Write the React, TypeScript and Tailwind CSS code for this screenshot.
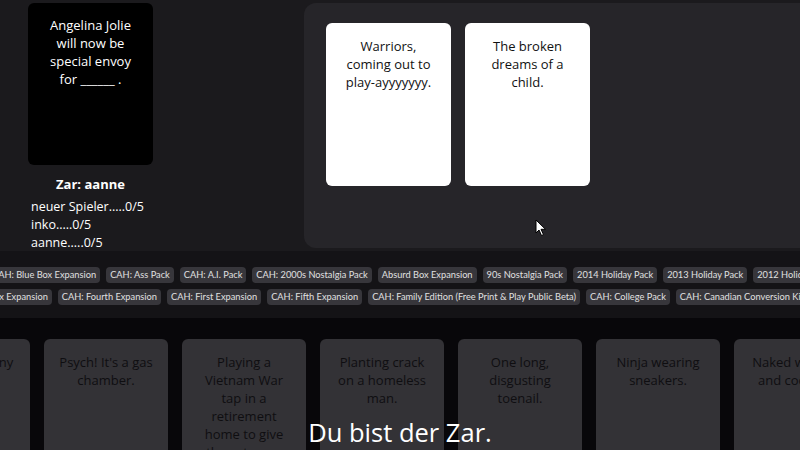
import React from 'react';

const font = "font-['Open_Sans','Noto_Sans',sans-serif]";

const packsTop = [
  'CAH: Blue Box Expansion',
  'CAH: Ass Pack',
  'CAH: A.I. Pack',
  'CAH: 2000s Nostalgia Pack',
  'Absurd Box Expansion',
  '90s Nostalgia Pack',
  '2014 Holiday Pack',
  '2013 Holiday Pack',
  '2012 Holiday Pack',
];

const packsBottom = [
  'CAH: Green Box Expansion',
  'CAH: Fourth Expansion',
  'CAH: First Expansion',
  'CAH: Fifth Expansion',
  'CAH: Family Edition (Free Print & Play Public Beta)',
  'CAH: College Pack',
  'CAH: Canadian Conversion Kit',
];

const hand = [
  'Having a funny uncle in Baltimore, Maine.',
  "Psych! It's a gas chamber.",
  'Playing a Vietnam War tap in a retirement home to give the veterans flashbacks.',
  'Planting crack on a homeless man.',
  'One long, disgusting toenail.',
  'Ninja wearing sneakers.',
  'Naked women and cocaine.',
];

const players = ['neuer Spieler.....0/5', 'inko.....0/5', 'aanne.....0/5'];

const Chip: React.FC<{ label: string }> = ({ label }) => (
  <span className="shrink-0 whitespace-nowrap rounded-[4px] bg-[#37363b] px-[4px] h-[16px] leading-[16px] font-['Lato',sans-serif] text-[9.25px] text-[#e0e0e0]">
    {label}
  </span>
);

export default function App() {
  return (
    <div className={`relative w-[800px] h-[450px] overflow-hidden bg-[#1b1a1d] ${font}`}>
      {/* top area */}
      <div className="flex h-[251px] pt-[3px]">
        <div className="w-[304px] shrink-0 pl-[28px]">
          <div className="w-[125px] h-[162px] rounded-[6px] bg-black px-[14px] pt-[13px] text-center text-[13px] leading-[18px] text-white">
            Angelina Jolie will now be special envoy for ______ .
          </div>
          <div className="w-[125px] mt-[10px] text-center text-[13px] font-bold text-white leading-[18px]">Zar: aanne</div>
          <div className="mt-[5px] pl-[3px] text-[12.5px] leading-[18px] text-white">
            {players.map((p) => (
              <div key={p}>{p}</div>
            ))}
          </div>
        </div>
        <div className="flex-1 h-[245px] rounded-l-[12px] bg-[#262529] pl-[22px] pt-[20px] flex gap-[14px] items-start">
          <div className="w-[125px] h-[163px] rounded-[6px] bg-white px-[14px] pt-[13.5px] text-center text-[13px] leading-[18px] text-[#111]">
            Warriors, coming out to play-ayyyyyyy.
          </div>
          <div className="w-[125px] h-[163px] rounded-[6px] bg-white px-[14px] pt-[13.5px] text-center text-[13px] leading-[18px] text-[#111]">
            The broken dreams of a child.
          </div>
        </div>
      </div>

      {/* packs */}
      <div className="h-[67px] bg-[#141316] pt-[16px]">
        <div className="flex gap-[6px] ml-[-12px]">
          {packsTop.map((p) => (
            <Chip key={p} label={p} />
          ))}
        </div>
        <div className="flex gap-[6px] ml-[-67px] mt-[6px]">
          {packsBottom.map((p) => (
            <Chip key={p} label={p} />
          ))}
        </div>
      </div>

      {/* hand */}
      <div className="h-[132px] bg-[#08070a] pt-[21px]">
        <div className="flex gap-[14px] ml-[-94px]">
          {hand.map((c) => (
            <div
              key={c}
              className="w-[124px] h-[170px] shrink-0 rounded-[6px] bg-[#333236] px-[13px] pt-[14px] text-center text-[13px] leading-[18px] text-[#0f0e11]"
            >
              {c}
            </div>
          ))}
        </div>
      </div>

      {/* cursor */}
      <svg className="absolute left-[535px] top-[219px]" width="12" height="18" viewBox="0 0 12 18">
        <path d="M1 1 L1 14 L4 11 L6.5 16.5 L8.5 15.6 L6 10.3 L10.5 10.3 Z" fill="#fff" stroke="#000" strokeWidth="1" />
      </svg>

      <div className="absolute left-0 right-0 bottom-[2px] text-center text-[25.5px] leading-[32px] text-white">
        Du bist der Zar.
      </div>
    </div>
  );
}
